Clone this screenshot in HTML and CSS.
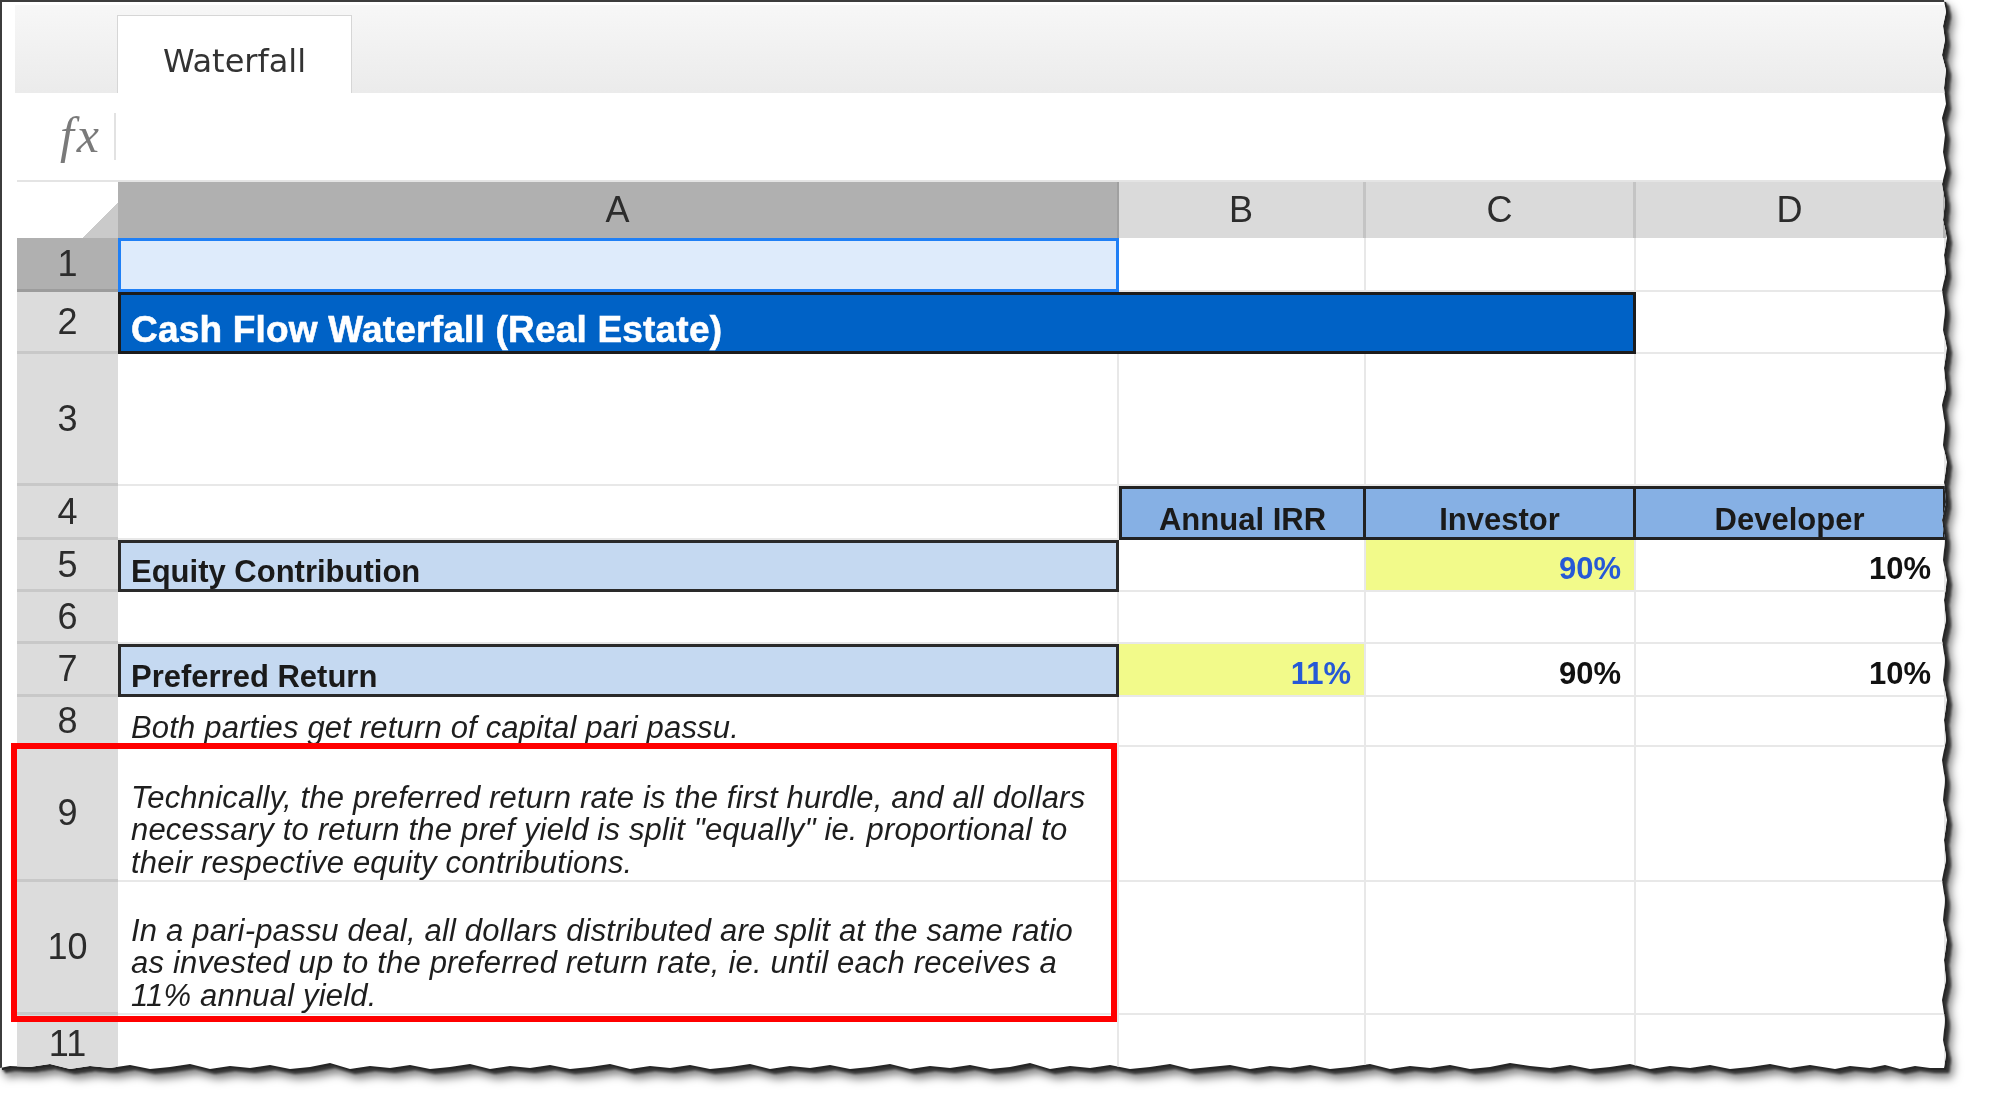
FILE: index.html
```html
<!DOCTYPE html>
<html lang="en">
<head>
    <meta charset="UTF-8">
    <meta name="viewport" content="width=device-width, initial-scale=1.0">
    <title>Waterfall</title>
    <link rel="stylesheet" href="styles.css">
</head>
<body>
    <div class="frame">
        <div class="sheet">
            <div class="tabbar">
                <div class="tab">Waterfall</div>
            </div>

            <div class="formula">
                <div class="fx">fx</div>
            </div>

            <div class="grid">
                <!-- column headers -->
                <div class="corner"></div>
                <div class="colhead sel">A</div>
                <div class="colhead">B</div>
                <div class="colhead">C</div>
                <div class="colhead last">D</div>

                <!-- 1 -->
                <div class="rowhead sel">1</div>
                <div class="cell active"></div>
                <div class="cell"></div>
                <div class="cell"></div>
                <div class="cell"></div>

                <!-- 2 -->
                <div class="rowhead">2</div>
                <div class="cell title">Cash Flow Waterfall (Real Estate)</div>
                <div class="cell"></div>

                <!-- 3 -->
                <div class="rowhead">3</div>
                <div class="cell"></div>
                <div class="cell"></div>
                <div class="cell"></div>
                <div class="cell"></div>

                <!-- 4 -->
                <div class="rowhead">4</div>
                <div class="cell"></div>
                <div class="cell hdr first">Annual IRR</div>
                <div class="cell hdr">Investor</div>
                <div class="cell hdr">Developer</div>

                <!-- 5 -->
                <div class="rowhead">5</div>
                <div class="cell label">Equity Contribution</div>
                <div class="cell"></div>
                <div class="cell num input">90%</div>
                <div class="cell num">10%</div>

                <!-- 6 -->
                <div class="rowhead">6</div>
                <div class="cell"></div>
                <div class="cell"></div>
                <div class="cell"></div>
                <div class="cell"></div>

                <!-- 7 -->
                <div class="rowhead">7</div>
                <div class="cell label">Preferred Return</div>
                <div class="cell num input">11%</div>
                <div class="cell num">90%</div>
                <div class="cell num">10%</div>

                <!-- 8 -->
                <div class="rowhead">8</div>
                <div class="cell note">Both parties get return of capital pari passu.</div>
                <div class="cell"></div>
                <div class="cell"></div>
                <div class="cell"></div>

                <!-- 9 -->
                <div class="rowhead">9</div>
                <div class="cell note">Technically, the preferred return rate is the first hurdle, and all dollars<br>necessary to return the pref yield is split "equally" ie. proportional to<br>their respective equity contributions.</div>
                <div class="cell"></div>
                <div class="cell"></div>
                <div class="cell"></div>

                <!-- 10 -->
                <div class="rowhead">10</div>
                <div class="cell note">In a pari-passu deal, all dollars distributed are split at the same ratio<br>as invested up to the preferred return rate, ie. until each receives a<br>11% annual yield.</div>
                <div class="cell"></div>
                <div class="cell"></div>
                <div class="cell"></div>

                <!-- 11 -->
                <div class="rowhead">11</div>
                <div class="cell"></div>
                <div class="cell"></div>
                <div class="cell"></div>
                <div class="cell"></div>
            </div>

            <div class="callout"></div>
        </div>
    </div>
</body>
</html>
```

FILE: styles.css
```css
body {
    margin: 0;
    background: #fff;
    font-family: "Liberation Sans", Arial, sans-serif;
    color: #1a1a1a;
}

/* torn-paper shadow around the sheet */
.frame {
    width: 1992px;
    height: 1113px;
    filter: drop-shadow(2px 2px 0 #262626) drop-shadow(3px 3px 1px #333) drop-shadow(3px 5px 4px rgba(0, 0, 0, 0.5));
}

.sheet {
    position: relative;
    width: 1948px;
    height: 1072px;
    box-sizing: border-box;
    background: #fff;
    border-top: 2px solid #3c3c3c;
    border-left: 2px solid #3c3c3c;
    overflow: hidden;
    clip-path: polygon(
        0 0, 1944px 0, 1946px 12px, 1943px 26px, 1945px 40px, 1942px 55px, 1946px 70px, 1944px 88px,
        1946px 104px, 1942px 118px, 1945px 135px, 1943px 152px, 1946px 168px, 1942px 184px,
        1945px 202px, 1943px 220px, 1947px 238px, 1944px 255px, 1946px 272px, 1942px 290px,
        1945px 310px, 1943px 330px, 1947px 348px, 1944px 368px, 1946px 388px, 1942px 405px,
        1945px 425px, 1943px 445px, 1947px 462px, 1944px 482px, 1946px 502px, 1942px 520px,
        1945px 540px, 1943px 560px, 1947px 580px, 1944px 600px, 1946px 620px, 1942px 640px,
        1945px 660px, 1943px 680px, 1947px 700px, 1944px 720px, 1946px 740px, 1942px 760px,
        1945px 780px, 1943px 800px, 1947px 820px, 1944px 840px, 1946px 860px, 1942px 880px,
        1945px 900px, 1943px 920px, 1947px 940px, 1944px 960px, 1946px 980px, 1942px 1000px,
        1945px 1020px, 1943px 1040px, 1946px 1055px, 1944px 1068px,
        1930px 1068px, 1915px 1066px, 1900px 1069px, 1885px 1065px, 1870px 1068px, 1850px 1066px,
        1835px 1069px, 1810px 1065px, 1790px 1068px, 1770px 1064px, 1750px 1067px, 1730px 1069px,
        1710px 1065px, 1690px 1068px, 1670px 1066px, 1650px 1069px, 1630px 1064px, 1610px 1067px,
        1590px 1069px, 1570px 1065px, 1550px 1068px, 1530px 1066px, 1510px 1063px, 1490px 1067px,
        1470px 1069px, 1450px 1065px, 1430px 1068px, 1410px 1066px, 1390px 1069px, 1370px 1064px,
        1350px 1067px, 1330px 1069px, 1310px 1065px, 1290px 1068px, 1270px 1066px, 1250px 1069px,
        1230px 1065px, 1210px 1067px, 1190px 1069px, 1170px 1064px, 1150px 1067px, 1130px 1069px,
        1110px 1065px, 1090px 1068px, 1070px 1066px, 1050px 1069px, 1030px 1063px, 1010px 1067px,
        990px 1069px, 970px 1065px, 950px 1068px, 930px 1066px, 910px 1069px, 890px 1064px,
        870px 1067px, 850px 1069px, 830px 1065px, 810px 1068px, 790px 1066px, 770px 1069px,
        750px 1064px, 730px 1067px, 710px 1069px, 690px 1065px, 670px 1068px, 650px 1066px,
        630px 1069px, 610px 1064px, 590px 1067px, 570px 1069px, 550px 1065px, 530px 1068px,
        510px 1066px, 490px 1069px, 470px 1064px, 450px 1067px, 430px 1069px, 410px 1065px,
        390px 1068px, 370px 1066px, 350px 1069px, 330px 1063px, 310px 1067px, 290px 1069px,
        270px 1065px, 250px 1068px, 230px 1066px, 210px 1069px, 190px 1064px, 170px 1067px,
        150px 1069px, 130px 1065px, 110px 1068px, 90px 1066px, 70px 1069px, 50px 1064px,
        30px 1067px, 10px 1066px, 0 1068px
    );
}

/* sheet tabs */
.tabbar {
    margin: 3px 0 0 13px;
    height: 88px;
    background: linear-gradient(#f7f7f7, #ebebeb);
    display: flex;
    align-items: flex-end;
}

.tab {
    margin-left: 102px;
    width: 235px;
    height: 78px;
    box-sizing: border-box;
    background: #fff;
    border: 1px solid #d6d6d6;
    border-bottom: none;
    text-align: center;
    font-family: "DejaVu Sans", sans-serif;
    font-size: 32px;
    line-height: 66px;
    padding-top: 12px;
    color: #333;
}

/* formula bar */
.formula {
    height: 87px;
    display: flex;
    align-items: center;
}

.fx {
    width: 114px;
    height: 47px;
    box-sizing: border-box;
    padding-right: 12px;
    border-right: 2px solid #e2e2e2;
    text-align: right;
    font-family: "Liberation Serif", "Times New Roman", serif;
    font-style: italic;
    font-size: 50px;
    letter-spacing: 3px;
    line-height: 44px;
    color: #7a7a7a;
}

/* cell grid */
.grid {
    margin-left: 15px;
    border-top: 2px solid #e4e4e4;
    display: grid;
    grid-template-columns: 101px 1001px 247px 270px 310px;
    grid-template-rows: 56px 54px 62px 132px 54px 52px 52px 53px 50px 135px 133px 60px;
}

.corner {
    background: linear-gradient(135deg, #fff calc(100% - 25px), #cacaca 0);
}

.colhead {
    background: #dadada;
    border-right: 3px solid #c4c4c4;
    display: flex;
    align-items: center;
    justify-content: center;
    font-size: 36px;
    color: #2c2c2c;
}

.colhead.sel {
    background: #b0b0b0;
    border-right: 2px solid #a0a0a0;
}

.colhead.last {
    border-right-color: #b4b4b4;
}

.rowhead {
    background: #dcdcdc;
    border-bottom: 3px solid #c8c8c8;
    display: flex;
    align-items: center;
    justify-content: center;
    font-size: 36px;
    color: #2c2c2c;
}

.rowhead.sel {
    background: #b0b0b0;
    border-bottom-color: #9c9c9c;
}

.cell {
    box-sizing: border-box;
    border-right: 2px solid #e8e8e8;
    border-bottom: 2px solid #e8e8e8;
    display: flex;
    align-items: flex-end;
    padding: 0 13px 2px;
    font-size: 31px;
    line-height: 32px;
    white-space: nowrap;
}

.cell.active {
    background: #deebfb;
    border: 3px solid #1f7ff5;
}

.cell.title {
    grid-column: span 3;
    background: #0062c6;
    border: 3px solid #1c1c1c;
    color: #fff;
    font-weight: bold;
    font-size: 37px;
    letter-spacing: 0.2px;
    -webkit-text-stroke: 0.6px #fff;
    line-height: 37px;
    padding: 0 10px 3px;
}

.cell.hdr {
    background: #86b0e4;
    border-top: 3px solid #222;
    border-bottom: 3px solid #222;
    border-right: 3px solid #222;
    justify-content: center;
    font-weight: bold;
    padding-bottom: 1px;
}

.cell.hdr.first {
    border-left: 3px solid #222;
}

.cell.label {
    background: #c5d9f1;
    border: 3px solid #2a2a2a;
    font-weight: bold;
    padding-left: 10px;
    padding-bottom: 1px;
}

.cell.num {
    justify-content: flex-end;
    font-weight: bold;
    color: #111;
    padding-bottom: 5px;
}

.cell.input {
    background: #f2fa8a;
    color: #2659d6;
}

.cell.note {
    font-style: italic;
    letter-spacing: 0.18px;
    line-height: 32.5px;
    color: #1e1e1e;
    padding-bottom: 1px;
}

/* red annotation box over rows 9-10 */
.callout {
    position: absolute;
    left: 9px;
    top: 741px;
    width: 1106px;
    height: 279px;
    box-sizing: border-box;
    border: 6px solid #ff0000;
}
```
